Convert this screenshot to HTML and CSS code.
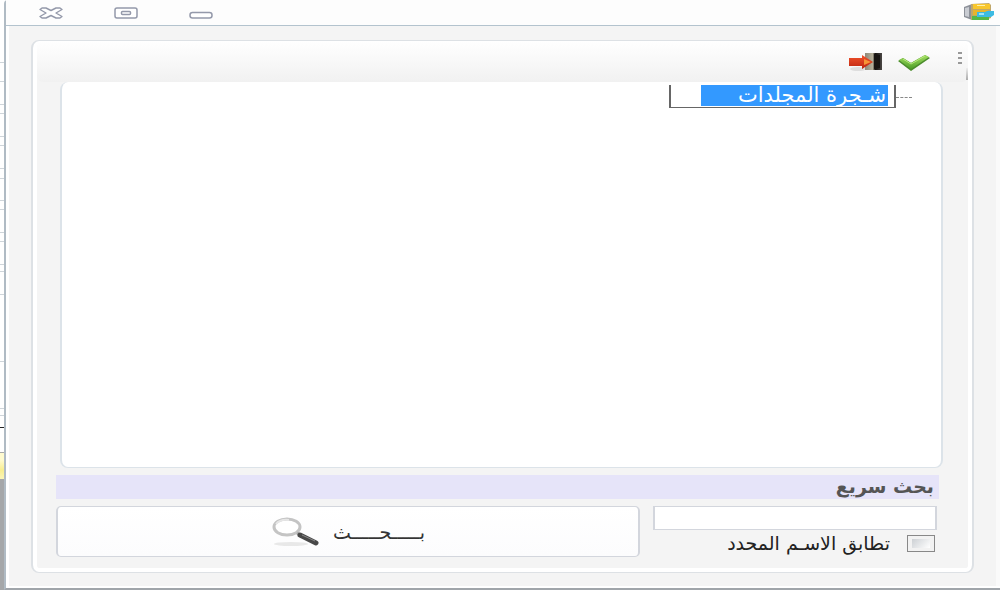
FILE: index.html
```html
<!DOCTYPE html>
<html lang="ar" dir="rtl">
<head>
    <meta charset="UTF-8">
    <meta name="viewport" content="width=device-width, initial-scale=1.0">
    <title>شجرة المجلدات</title>
    <link rel="stylesheet" href="styles.css">
</head>
<body>
    <div class="window">
        <header class="titlebar">
            <svg class="app-icon" width="32" height="18" viewBox="0 0 32 18">
                <path d="M1 4 9 1V17L1 14Z" fill="#8d9199"/>
                <path d="M2 5 6 4V14L2 13Z" fill="#c9ccd2"/>
                <path d="M8 1 26 0 28 2V15L22 17H8Z" fill="#c0a76a"/>
                <rect x="10" y="1" width="17" height="5" fill="#f8c62c"/>
                <rect x="14" y="2" width="8" height="1" fill="#fff0a8"/>
                <rect x="10" y="7" width="15" height="5" fill="#e8b52c"/>
                <rect x="9" y="13" width="17" height="4" fill="#55b848"/>
                <path d="M14 9H22L24 8H31V12L28 14H14Z" fill="#3dbbe3"/>
                <path d="M16 10H21V12H16Z" fill="#9fe3f6"/>
            </svg>
            <div class="window-controls">
                <button class="control" type="button" aria-label="تصغير">
                    <svg width="24" height="12" viewBox="0 0 24 12"><rect x="1" y="5.500" width="22" height="5.500" rx="2.500" fill="#fff" stroke="#9499aa" stroke-width="1.500"/></svg>
                </button>
                <button class="control" type="button" aria-label="تكبير">
                    <svg width="24" height="12" viewBox="0 0 24 12" fill="#fff" stroke="#9499aa" stroke-width="1.500"><rect x="1" y="1" width="22" height="10" rx="2"/><rect x="7.500" y="4.500" width="9" height="3" rx="1"/></svg>
                </button>
                <button class="control" type="button" aria-label="إغلاق">
                    <svg width="24" height="12" viewBox="0 0 24 12"><path d="M3 1H7L12 3.500 17 1H21L23 2.500 17 6 23 9.500 21 11H17L12 8.500 7 11H3L1 9.500 7 6 1 2.500Z" fill="#fff" stroke="#9499aa" stroke-width="1.400" stroke-linejoin="round"/></svg>
                </button>
            </div>
        </header>

        <main class="content">
            <div class="panel">
                <div class="toolbar">
                    <span class="grip"></span>
                    <button class="tool" type="button" aria-label="موافق">
                        <svg width="34" height="18" viewBox="0 0 34 18">
                            <defs><linearGradient id="tick" x1="0" y1="0" x2="0" y2="1"><stop offset="0" stop-color="#a4df62"/><stop offset="1" stop-color="#4d9f28"/></linearGradient></defs>
                            <path d="M1 8 6 5 14 10 28 2 33 5 14 18Z" fill="#4b8c2c"/>
                            <path d="M2 7 6 5 14 10 28 2 32 4 14 16Z" fill="url(#tick)"/>
                            <path d="M6 6 14 11 28 3" fill="none" stroke="#b6e87c" stroke-width="1"/>
                        </svg>
                    </button>
                    <button class="tool" type="button" aria-label="خروج">
                        <svg width="35" height="20" viewBox="0 0 35 20">
                            <defs>
                                <linearGradient id="door"><stop offset="0" stop-color="#8f887a"/><stop offset=".45" stop-color="#b5b09a"/><stop offset=".6" stop-color="#15120f"/><stop offset="1" stop-color="#4a4744"/></linearGradient>
                                <linearGradient id="arrow" x1="0" y1="0" x2="0" y2="1"><stop offset="0" stop-color="#f2542c"/><stop offset="1" stop-color="#bd2410"/></linearGradient>
                            </defs>
                            <ellipse cx="10" cy="17" rx="8" ry="2" fill="#dedede"/>
                            <rect x="17" y="1" width="17" height="17" fill="url(#door)"/>
                            <path d="M26 2 32 3V16L26 17Z" fill="#181512"/>
                            <path d="M1 6H14V3L25 10 14 17V14H1Z" fill="url(#arrow)"/>
                            <path d="M16 7 23 10 16 13Z" fill="#f79436"/>
                        </svg>
                    </button>
                    <span class="toolbar-edge"></span>
                </div>

                <div class="tree">
                    <span class="branch"></span>
                    <div class="node"><span class="node-text">شـجرة المجلدات</span></div>
                </div>

                <h2 class="section-title">بحث سريع</h2>

                <form class="search">
                    <div class="search-fields">
                        <input class="search-input" type="text" name="q" aria-label="بحث سريع">
                        <label class="match"><input class="match-box" type="checkbox" name="exact">تطابق الاسـم المحدد</label>
                    </div>
                    <button class="search-button" type="button">
                        <span>بـــــحـــــث</span>
                        <svg width="50" height="30" viewBox="0 0 50 30">
                            <ellipse cx="20" cy="27" rx="17" ry="2" fill="#e8e8e8"/>
                            <ellipse cx="16" cy="10" rx="13" ry="8" fill="#fff" stroke="#c4c4c4" stroke-width="3"/>
                            <path d="M5 7Q9 2 18 3" fill="none" stroke="#e6e6e6" stroke-width="2"/>
                            <path d="M26 16 31 19" stroke="#aaa" stroke-width="3"/>
                            <path d="M29 18 45 26" stroke="#484848" stroke-width="5" stroke-linecap="round"/>
                            <path d="M31 18 44 24" stroke="#888" stroke-width="1"/>
                        </svg>
                    </button>
                </form>
            </div>
        </main>
    </div>
    <div class="backdrop"></div>
</body>
</html>
```
FILE: styles.css
```css
* {
    box-sizing: border-box;
}

body {
    display: flex;
    margin: 0;
    min-height: 100vh;
    font-family: "DejaVu Sans", sans-serif;
    font-size: 19px;
    color: #333;
    background-color: #fff;
}

button {
    padding: 0;
    border: none;
    background: transparent;
    font-family: inherit;
    color: inherit;
    cursor: pointer;
}

svg {
    display: block;
}

/* the window lying behind, seen as a thin strip */
.backdrop {
    width: 4px;
    background: linear-gradient(
        #fff 62px, #cfd5da 62px 63px, #fff 63px 81px, #cfd5da 81px 82px,
        #fff 82px 104px, #cfd5da 104px 105px, #fff 105px 113px, #cfd5da 113px 114px,
        #fff 114px 136px, #cfd5da 136px 137px, #fff 137px 145px, #cfd5da 145px 146px,
        #fff 146px 168px, #cfd5da 168px 169px, #fff 169px 178px, #cfd5da 178px 179px,
        #fff 179px 200px, #cfd5da 200px 201px, #fff 201px 209px, #cfd5da 209px 210px,
        #fff 210px 232px, #cfd5da 232px 233px, #fff 233px 241px, #cfd5da 241px 242px,
        #fff 242px 264px, #cfd5da 264px 265px, #fff 265px 271px, #cfd5da 271px 272px,
        #fff 272px 294px, #cfd5da 294px 295px, #fff 295px 361px, #cfd5da 361px 362px,
        #fff 362px 408px, #cfd5da 408px 409px, #fff 409px 415px, #cfd5da 415px 416px,
        #fff 416px 427px, #222 427px 428px, #fff 428px 452px, #aaa 452px 453px,
        #fffbd0 453px 460px, #f8ee90 470px, #fbf5b8 479px, #a5a7a9 479px);
}

.window {
    display: flex;
    flex: 1;
    flex-direction: column;
    border-left: 2px solid #b0bbc4;
    border-bottom: 2px solid #a0a5aa;
    border-top-left-radius: 4px;
}

.titlebar {
    display: flex;
    justify-content: space-between;
    height: 26px;
    padding: 3px 5px 0 33px;
    border-bottom: 1px solid #b3c3ce;
    background-color: #fdfdfd;
}

.window-controls {
    display: flex;
    gap: 51px;
    padding-top: 4px;
}

.control {
    height: 12px;
}

.content {
    display: flex;
    flex: 1;
    padding: 14px 26px 15px 25px;
    background-color: #f4f4f4;
    box-shadow: inset 3px -2px #fff, inset -4px 0 #fafafa;
}

.panel {
    display: flex;
    flex: 1;
    flex-direction: column;
    border: solid #dde1e5;
    border-width: 1px 2px;
    border-radius: 8px;
    box-shadow: inset 0 0 0 4px #fff;
}

.toolbar {
    display: flex;
    align-items: center;
    height: 41px;
    margin: 0 4px;
    padding-right: 6px;
    background: linear-gradient(#fff, #f8f8f8 50%, #f1f1f1);
    border-radius: 6px;
    position: relative;
}

.grip {
    width: 4px;
    height: 12px;
    margin-left: 27px;
    margin-bottom: 8px;
    background: repeating-linear-gradient(#999 0 2px, transparent 2px 5px);
}

.tool {
    margin-left: 14px;
}

.toolbar-edge {
    position: absolute;
    right: 0;
    bottom: 2px;
    width: 2px;
    height: 12px;
    background: linear-gradient(#eee, #aaa);
}

.tree {
    display: flex;
    flex: 1;
    align-items: flex-start;
    margin: 0 29px 0 27px;
    padding: 3px 29px 0 0;
    border: solid #dce3e9;
    border-width: 0 2px 1px;
    border-radius: 8px;
    background-color: #fff;
}

.branch {
    width: 16px;
    margin-top: 12px;
    border-top: 1px dashed #888;
}

.node {
    display: flex;
    width: 227px;
    height: 23px;
    padding-right: 6px;
    border: solid #666;
    border-width: 0 2px 1px;
}

.node-text {
    min-width: 187px;
    height: 21px;
    padding: 0 2px;
    font-size: 21px;
    line-height: 20px;
    color: #fff;
    background-color: #3399ff;
}

.section-title {
    height: 24px;
    margin: 7px 33px 7px 23px;
    padding: 0 5px;
    font-size: 19px;
    line-height: 22px;
    color: #555;
    background-color: #e6e4f9;
}

.search {
    display: flex;
    gap: 13px;
    margin: 0 35px 15px 23px;
}

.search-fields {
    width: 284px;
}

.search-input {
    display: block;
    width: 100%;
    height: 24px;
    border: 2px solid #d3d6dd;
    border-width: 1px 2px;
    background-color: #fff;
}

.match {
    display: flex;
    align-items: center;
    gap: 17px;
    height: 26px;
    padding-right: 2px;
    color: #222;
}

.match-box {
    width: 28px;
    height: 17px;
    margin: 0;
    appearance: none;
    border: 1px solid #888;
    background: linear-gradient(135deg, #ccd0d4, #fff) content-box, #f2f2f2;
    padding: 3px 4px;
}

.match-box:checked {
    background: #666 content-box;
}

.search-button {
    display: flex;
    flex: 1;
    align-items: center;
    justify-content: center;
    gap: 12px;
    height: 51px;
    border: solid #d3d6dd;
    border-width: 1px 2px;
    border-radius: 5px;
    background: linear-gradient(#fff, #fcfcfd);
    font-size: 19px;
}
```
